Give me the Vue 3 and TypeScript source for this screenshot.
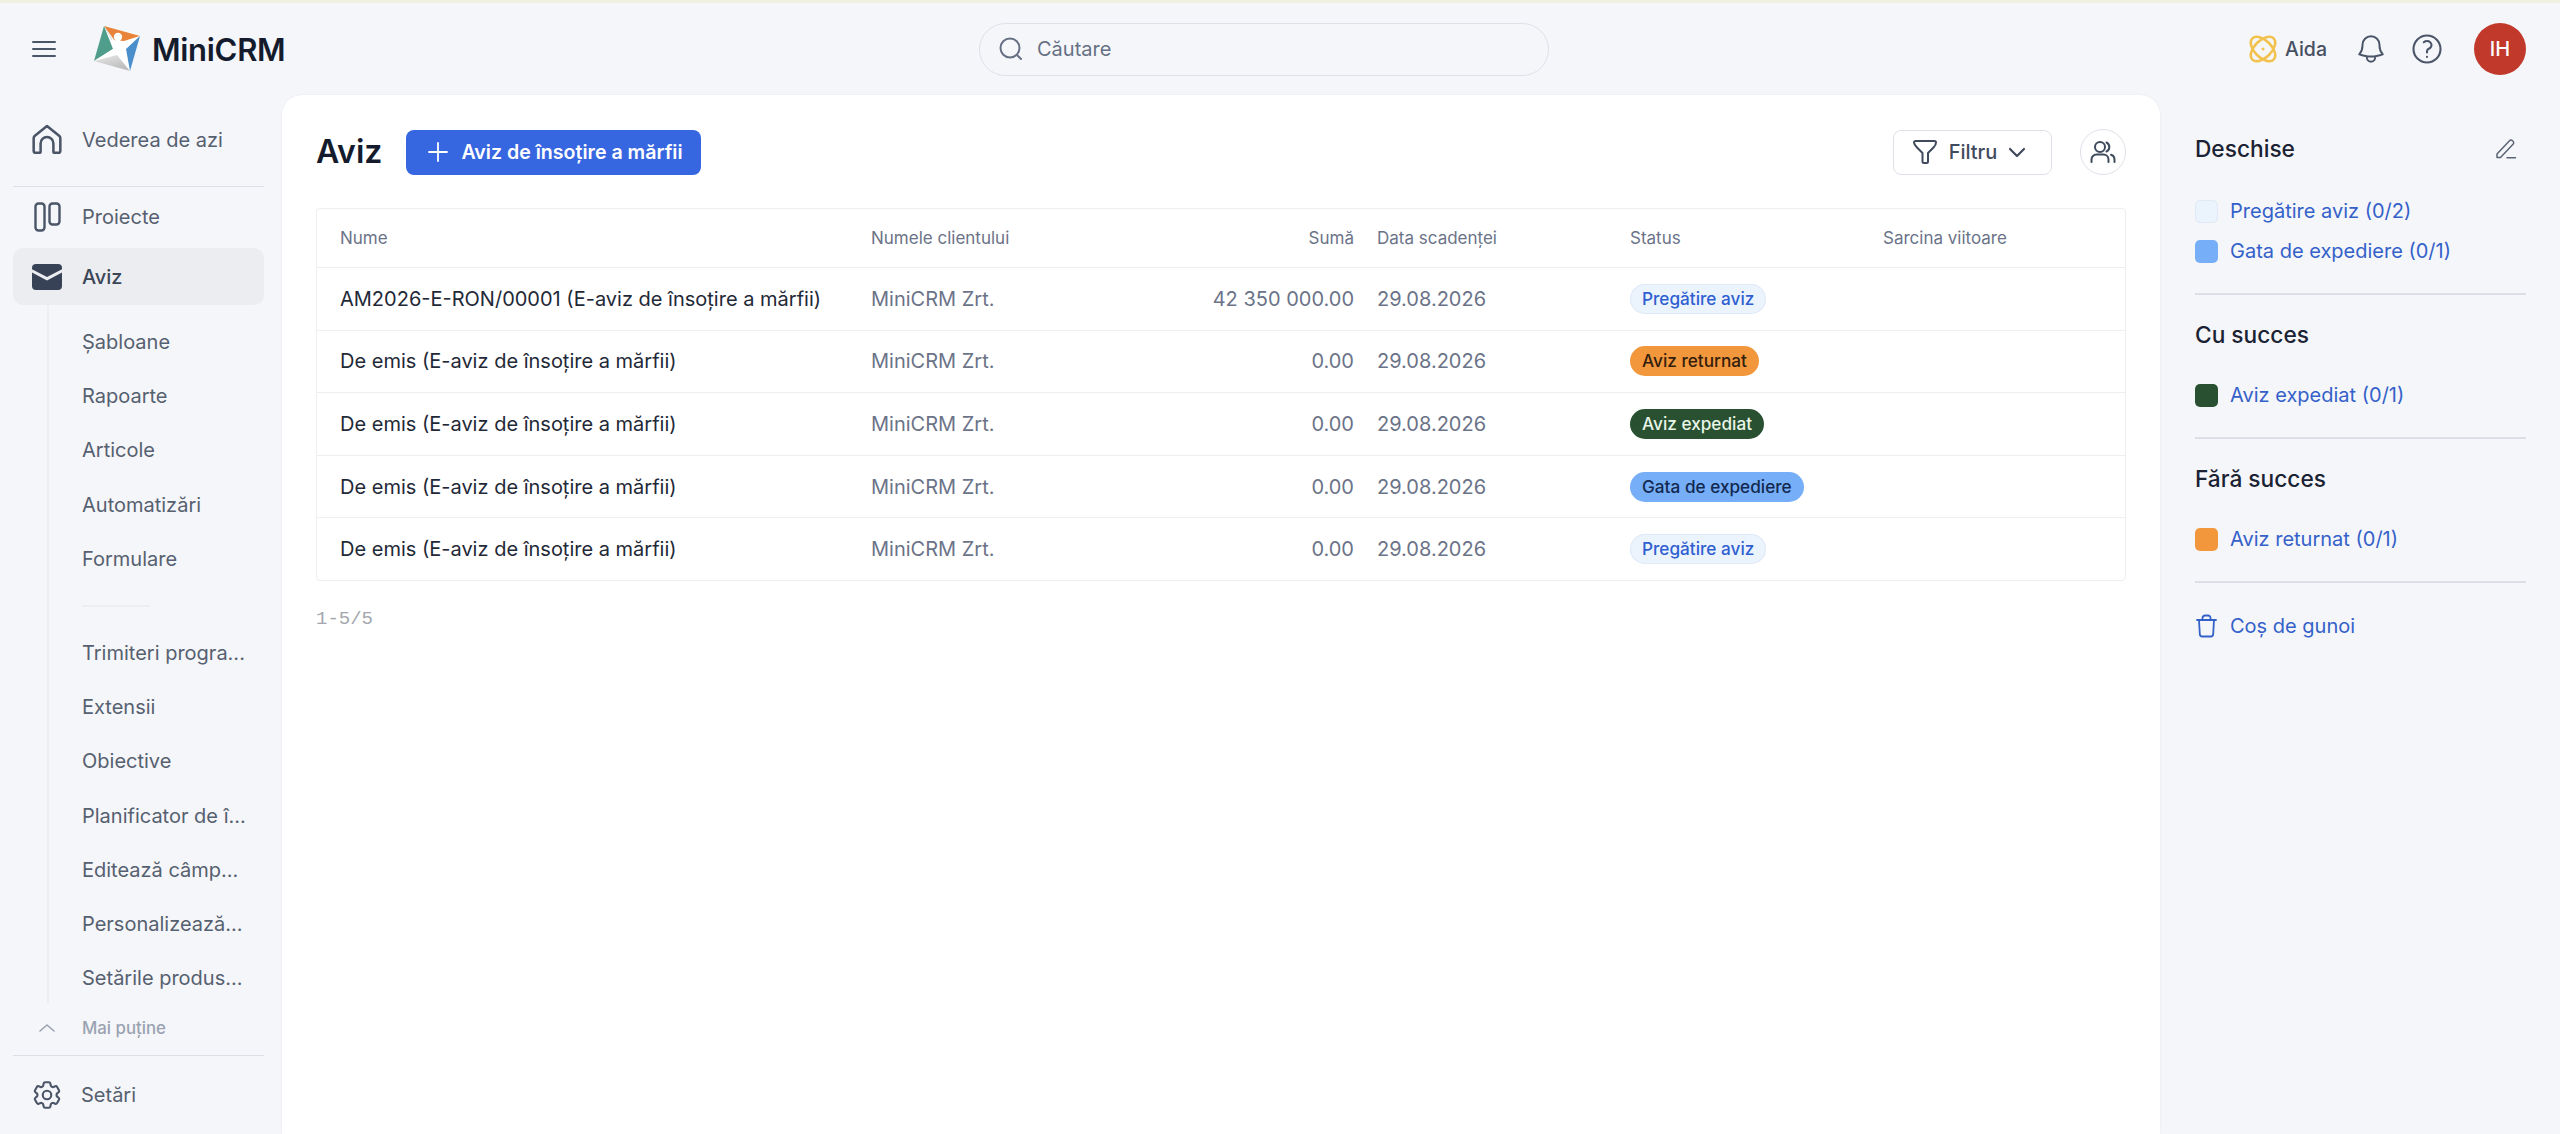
<script setup lang="ts">
interface Row { name: string; sum: string; status: string; cls: string }
const primaryRows: Row[] = [
  { name: 'AM2026-E-RON/00001 (E-aviz de însoțire a mărfii)', sum: '42 350 000.00', status: 'Pregătire aviz', cls: 'prep' },
  { name: 'De emis (E-aviz de însoțire a mărfii)', sum: '0.00', status: 'Aviz returnat', cls: 'ret' },
  { name: 'De emis (E-aviz de însoțire a mărfii)', sum: '0.00', status: 'Aviz expediat', cls: 'exp' },
  { name: 'De emis (E-aviz de însoțire a mărfii)', sum: '0.00', status: 'Gata de expediere', cls: 'gata' },
  { name: 'De emis (E-aviz de însoțire a mărfii)', sum: '0.00', status: 'Pregătire aviz', cls: 'prep' },
]
const subA = ['Șabloane', 'Rapoarte', 'Articole', 'Automatizări', 'Formulare']
const subB = ['Trimiteri progra...', 'Extensii', 'Obiective', 'Planificator de î...', 'Editează câmp...', 'Personalizează...', 'Setările produs...']
</script>

<template>
  <div class="page">
    <div class="strip"></div>
    <header class="top">
      <div class="brand">
        <svg class="burger" width="24" height="18" viewBox="0 0 24 18" fill="none" stroke="#4b5568" stroke-width="2" stroke-linecap="round"><path d="M1 2h22M1 9h22M1 16h22"/></svg>
        <svg class="logo" width="48" height="46" viewBox="0 0 48 46">
          <defs><linearGradient id="g" x1="0" y1="0" x2="0.4" y2="1"><stop offset="0" stop-color="#f2f2f2"/><stop offset="1" stop-color="#bdbdbd"/></linearGradient></defs>
          <polygon points="11,1 47,11 25,20" fill="#e9833a"/>
          <polygon points="47,11 37,46 25,24" fill="#4a8fcc"/>
          <polygon points="37,46 1,36 22,26" fill="url(#g)"/>
          <polygon points="1,36 11,1 23,22" fill="#4f9e8b"/>
          <polygon points="11,1 19,15 31,16 47,11 33,24 37,46 24,30 1,36 20,24" fill="#fff"/>
          <circle cx="25" cy="12" r="4.2" fill="#fff"/>
        </svg>
        <span class="wordmark">MiniCRM</span>
      </div>
      <div class="search">
        <svg width="26" height="26" viewBox="0 0 26 26" fill="none" stroke="#667085" stroke-width="2" stroke-linecap="round"><circle cx="12" cy="12" r="9.5"/><path d="M19 19l4 4"/></svg>
        <span>Căutare</span>
      </div>
      <div class="tools">
        <span class="aida">
          <svg width="28" height="28" viewBox="0 0 28 28" fill="none" stroke="#f2c14e" stroke-width="2.6"><ellipse cx="14" cy="14" rx="15" ry="8.500" transform="rotate(45 14 14)"/><ellipse cx="14" cy="14" rx="15" ry="8.500" transform="rotate(-45 14 14)"/><circle cx="14" cy="14" r="1.500" fill="#f2c14e" stroke="none"/></svg>
          <span>Aida</span>
        </span>
        <svg class="bell" width="34" height="34" viewBox="0 0 24 24" fill="none" stroke="#4b5568" stroke-width="1.4" stroke-linecap="round" stroke-linejoin="round"><path d="M14.857 17.082a23.848 23.848 0 0 0 5.454-1.31A8.967 8.967 0 0 1 18 9.75V9A6 6 0 0 0 6 9v.75a8.967 8.967 0 0 1-2.312 6.022c1.733.64 3.56 1.085 5.455 1.31m5.714 0a24.255 24.255 0 0 1-5.714 0m5.714 0a3 3 0 1 1-5.714 0"/></svg>
        <svg class="help" width="36" height="36" viewBox="0 0 24 24" fill="none" stroke="#4b5568" stroke-width="1.4" stroke-linecap="round" stroke-linejoin="round"><path d="M9.879 7.519c1.171-1.025 3.071-1.025 4.242 0 1.172 1.025 1.172 2.687 0 3.712-.203.179-.43.326-.67.442-.745.361-1.45.999-1.45 1.827v.75M21 12a9 9 0 1 1-18 0 9 9 0 0 1 18 0Zm-9 5.25h.008v.008H12v-.008Z"/></svg>
        <span class="avatar">IH</span>
      </div>
    </header>

    <div class="body">
      <aside class="side">
        <div class="nav-item first">
          <svg class="nav-icon" width="32" height="32" viewBox="0 0 24 24" fill="none" stroke="#4b5568" stroke-width="1.9" stroke-linejoin="round"><path d="M2 20V10.6c0-.6.3-1.2.7-1.6L12 1.500 21.3 9c.4.4.7 1 .7 1.6V20a1.6 1.6 0 0 1-1.6 1.6h-2.6a1 1 0 0 1-1-1v-6a4.8 4.8 0 0 0-9.6 0v6a1 1 0 0 1-1 1H3.6A1.6 1.6 0 0 1 2 20z"/></svg>
          <span>Vederea de azi</span>
        </div>
        <div class="rule"></div>
        <div class="nav-item proj">
          <svg class="nav-icon" width="32" height="32" viewBox="0 0 32 32" fill="none" stroke="#4b5568" stroke-width="2.4"><rect x="4.500" y="2.500" width="9" height="27" rx="3"/><rect x="18.500" y="2.500" width="10" height="21" rx="3"/></svg>
          <span>Proiecte</span>
        </div>
        <div class="nav-item active">
          <svg class="nav-icon" width="32" height="28" viewBox="0 0 32 28"><path d="M5 1h22a4 4 0 0 1 4 4v1.200L16 14 1 6.200V5a4 4 0 0 1 4-4z" fill="#374257"/><path d="M1 9.600l15 7.800 15-7.800V23a4 4 0 0 1-4 4H5a4 4 0 0 1-4-4z" fill="#374257"/></svg>
          <span>Aviz</span>
        </div>
        <div class="sub">
          <div v-for="s in subA" :key="s" class="sub-item"><span>{{ s }}</span></div>
          <div class="sub-rule"></div>
          <div v-for="s in subB" :key="s" class="sub-item"><span>{{ s }}</span></div>
        </div>
        <div class="less">
          <svg width="18" height="10" viewBox="0 0 18 10" fill="none" stroke="#9aa2b1" stroke-width="1.6" stroke-linecap="round" stroke-linejoin="round"><path d="M2 8l7-6 7 6"/></svg>
          <span>Mai puține</span>
        </div>
        <div class="rule"></div>
        <div class="nav-item settings">
          <svg class="nav-icon" width="34" height="34" viewBox="0 0 24 24" fill="none" stroke="#4b5568" stroke-width="1.5" stroke-linejoin="round"><path d="M9.594 3.94c.09-.542.56-.94 1.11-.94h2.593c.55 0 1.02.398 1.11.94l.213 1.281c.063.374.313.686.645.87.074.04.147.083.22.127.325.196.72.257 1.075.124l1.217-.456a1.125 1.125 0 0 1 1.37.49l1.296 2.247a1.125 1.125 0 0 1-.26 1.431l-1.003.827c-.293.241-.438.613-.43.992a7.723 7.723 0 0 1 0 .255c-.008.378.137.75.43.991l1.004.827c.424.35.534.955.26 1.43l-1.298 2.247a1.125 1.125 0 0 1-1.369.491l-1.217-.456c-.355-.133-.75-.072-1.076.124a6.47 6.47 0 0 1-.22.128c-.331.183-.581.495-.644.869l-.213 1.281c-.09.543-.56.94-1.11.94h-2.594c-.55 0-1.019-.398-1.11-.94l-.213-1.281c-.062-.374-.312-.686-.644-.87a6.52 6.52 0 0 1-.22-.127c-.325-.196-.72-.257-1.076-.124l-1.217.456a1.125 1.125 0 0 1-1.369-.49l-1.297-2.247a1.125 1.125 0 0 1 .26-1.431l1.004-.827c.292-.24.437-.613.43-.991a6.932 6.932 0 0 1 0-.255c.007-.38-.138-.751-.43-.992l-1.004-.827a1.125 1.125 0 0 1-.26-1.43l1.297-2.247a1.125 1.125 0 0 1 1.37-.491l1.216.456c.356.133.751.072 1.076-.124.072-.044.146-.086.22-.128.332-.183.582-.495.644-.869l.214-1.28Z"/><path d="M15 12a3 3 0 1 1-6 0 3 3 0 0 1 6 0Z"/></svg>
          <span>Setări</span>
        </div>
      </aside>

      <main class="main">
        <div class="title-row">
          <h1>Aviz</h1>
          <button class="primary">
            <svg width="20" height="20" viewBox="0 0 20 20" stroke="#fff" stroke-width="1.8" stroke-linecap="round"><path d="M10 1v18M1 10h18"/></svg>
            <span>Aviz de însoțire a mărfii</span>
          </button>
          <div class="spacer"></div>
          <button class="filter">
            <svg width="26" height="26" viewBox="0 0 26 26" fill="none" stroke="#3f4a5c" stroke-width="2" stroke-linejoin="round"><path d="M2 3.500C2 2.700 2.700 2 3.500 2h19c.8 0 1.500.7 1.500 1.500 0 2-1 3.500-2.500 5l-5.500 5.500v8.500c0 .8-.7 1.500-1.500 1.500h-2.500c-.8 0-1.500-.7-1.500-1.500V14L5 8.500C3.500 7 2 5.500 2 3.500z"/></svg>
            <span>Filtru</span>
            <svg width="18" height="11" viewBox="0 0 18 11" fill="none" stroke="#3f4a5c" stroke-width="2.200" stroke-linecap="round" stroke-linejoin="round"><path d="M2 2l7 7 7-7"/></svg>
          </button>
          <button class="round">
            <svg width="26" height="24" viewBox="0 0 26 24" fill="none" stroke="#3f4a5c" stroke-width="2" stroke-linecap="round"><circle cx="10" cy="7" r="5"/><path d="M1.500 22v-2.500a5 5 0 0 1 5-5h7a5 5 0 0 1 5 5V22"/><path d="M16.500 2.500a5 5 0 0 1 0 9M21 14.800a5 5 0 0 1 3.500 4.700V22"/></svg>
          </button>
        </div>

        <div class="table">
          <div class="tr th">
            <div class="td">Nume</div>
            <div class="td">Numele clientului</div>
            <div class="td num">Sumă</div>
            <div class="td">Data scadenței</div>
            <div class="td">Status</div>
            <div class="td">Sarcina viitoare</div>
          </div>
          <div v-for="(r, i) in primaryRows" :key="i" class="tr">
            <div class="td name">{{ r.name }}</div>
            <div class="td muted">MiniCRM Zrt.</div>
            <div class="td num muted">{{ r.sum }}</div>
            <div class="td muted">29.08.2026</div>
            <div class="td"><span class="pill" :class="r.cls">{{ r.status }}</span></div>
            <div class="td"></div>
          </div>
        </div>
        <div class="pager">1-5/5</div>
      </main>

      <aside class="panel">
        <div class="panel-head">
          <h2>Deschise</h2>
          <svg width="22" height="22" viewBox="0 0 22 22" fill="none" stroke="#5b6474" stroke-width="1.500" stroke-linecap="round" stroke-linejoin="round"><path d="M2 19.500v-3.500L14.500 2.800a2 2 0 0 1 3 0l.5.5a2 2 0 0 1 0 3L5.500 19.500z"/><path d="M12 19.800h8.500"/></svg>
        </div>
        <div class="legend l1"><i class="sw prep-sw"></i><span>Pregătire aviz (0/2)</span></div>
        <div class="legend"><i class="sw gata-sw"></i><span>Gata de expediere (0/1)</span></div>
        <div class="prule"></div>
        <h2>Cu succes</h2>
        <div class="legend l2"><i class="sw exp-sw"></i><span>Aviz expediat (0/1)</span></div>
        <div class="prule"></div>
        <h2>Fără succes</h2>
        <div class="legend l2"><i class="sw ret-sw"></i><span>Aviz returnat (0/1)</span></div>
        <div class="prule"></div>
        <div class="legend trash">
          <svg width="23" height="24" viewBox="0 0 23 24" fill="none" stroke="#3461c9" stroke-width="1.800" stroke-linecap="round" stroke-linejoin="round"><path d="M2 6h19M7.500 6V4a2.500 2.500 0 0 1 2.500-2.500h3A2.500 2.500 0 0 1 15.500 4v2M4 6l.8 14a2.500 2.500 0 0 0 2.500 2.500h8.400a2.500 2.500 0 0 0 2.500-2.500L19 6"/></svg>
          <span>Coș de gunoi</span>
        </div>
      </aside>
    </div>
  </div>
</template>

<style>
html, body { margin: 0; padding: 0; background: #f5f6f9; }
</style>

<style scoped>
.page {
  height: 100vh; display: flex; flex-direction: column; overflow: hidden;
  background: #f5f6f9; color: #1f2937;
  font-family: Inter, "Noto Sans", sans-serif;
}
.strip { height: 3px; background: #f0f2df; flex: none; }
.top { height: 92px; flex: none; display: flex; align-items: center; position: relative; }
.brand { display: flex; align-items: center; padding-left: 32px; width: 979px; box-sizing: border-box; }
.burger { margin-right: 37px; }
.logo { margin-right: 11px; margin-top: -2px; }
.wordmark { font-size: 31px; font-weight: 600; color: #141b2d; letter-spacing: -0.3px; }
.search {
  width: 570px; height: 53px; box-sizing: border-box; border: 1px solid #dfe1e8; border-radius: 27px;
  display: flex; align-items: center; gap: 13px; padding-left: 18px; color: #667085; font-size: 20px;
}
.tools { margin-left: auto; padding-right: 34px; display: flex; align-items: center; }
.aida { display: flex; align-items: center; gap: 8px; font-size: 19.5px; font-weight: 500; color: #475063; margin-right: 27px; }
.bell { margin-right: 21px; }
.help { margin-right: 29px; }
.avatar {
  width: 52px; height: 52px; border-radius: 50%; background: #c0392b; color: #fff;
  display: flex; align-items: center; justify-content: center; font-size: 20px; font-weight: 500;
}
.body { flex: 1; display: flex; min-height: 0; }
.side { width: 282px; flex: none; box-sizing: border-box; padding: 0 18px 0 13px; display: flex; flex-direction: column; }
.nav-item { display: flex; align-items: center; color: #556070; font-size: 20px; padding-left: 18px; gap: 19px; flex: none; }
.nav-icon { flex: none; }
.first { height: 66px; margin-top: 12px; margin-bottom: 13px; }
.proj { height: 60px; margin-bottom: 1px; }
.active { height: 57px; background: #ebedf1; border-radius: 10px; color: #3c4657; font-weight: 500; }
.settings { height: 78px; gap: 17px; padding-left: 17px; }
.rule { height: 1px; background: #dcdfe5; flex: none; }
.sub { margin-left: 34px; position: relative; padding-top: 10px; padding-left: 35px; height: 698px; box-sizing: border-box; flex: none; }
.sub::before { content: ""; position: absolute; left: 0; top: 0; bottom: 0; width: 2px; background: #eceef2; }
.sub-item { height: 54.2px; display: flex; align-items: center; color: #556070; font-size: 20px; white-space: nowrap; }
.sub-rule { width: 68px; height: 2px; background: #eceef2; margin: 19px 0 19px; }
.less { height: 50px; margin-bottom: 2px; display: flex; align-items: center; color: #9aa2b1; font-size: 16.8px; font-weight: 500; padding-left: 25px; gap: 26px; flex: none; }
.main {
  flex: 1; min-width: 0; background: #fff; border-radius: 20px 20px 0 0; box-sizing: border-box;
  padding: 34px 34px 0 34px; box-shadow: 0 0 2px rgba(30, 40, 60, .08);
}
.title-row { display: flex; align-items: center; height: 46px; }
h1 { font-size: 32px; font-weight: 600; margin: 0 24px 0 0; color: #141b2d; line-height: 1; }
.primary {
  height: 45px; width: 295px; box-sizing: border-box; background: #3666e0; color: #fff; border: 0; border-radius: 8px; font: inherit;
  font-size: 19.6px; font-weight: 600; display: flex; align-items: center; gap: 13px; padding: 0 0 0 22px;
}
.spacer { flex: 1; }
.filter {
  height: 45px; width: 159px; box-sizing: border-box; background: #fff; border: 1px solid #dfe1e8; border-radius: 8px;
  font: inherit; font-size: 20px; font-weight: 500; color: #3f4a5c; display: flex; align-items: center; justify-content: center; gap: 11px;
  margin-right: 28px; padding: 0 7px 0 0;
}
.round {
  width: 46px; height: 46px; box-sizing: border-box; padding: 0; border-radius: 50%; background: #fff; border: 1px solid #dfe1e8;
  display: flex; align-items: center; justify-content: center;
}
.table { margin-top: 33px; border: 1px solid #eceef1; border-radius: 4px; }
.tr { display: grid; grid-template-columns: 530px 200px 307px 253px 253px 1fr; height: 62.6px; box-sizing: border-box; border-top: 1px solid #eceef1; align-items: center; }
.th { height: 58px; border-top: 0; font-size: 17px; color: #6b7388; }
.td { padding: 0 0 0 23px; white-space: nowrap; }
.td:nth-child(2) { padding-left: 24px; }
.num { text-align: right; }
.name { font-size: 20px; color: #1f2937; }
.muted { font-size: 20px; color: #6b7388; }
.pill {
  display: inline-block; height: 30px; line-height: 30px; box-sizing: border-box; border-radius: 15px; padding: 0 12px;
  font-size: 17.2px; font-weight: 500;
}
.prep { background: #ebf3fd; color: #2f5fd0; box-shadow: inset 0 0 0 1px #dfe9f6; }
.ret { background: #f2973c; color: #33200c; }
.exp { background: #295030; color: #e8f6e8; }
.gata { background: #76aef8; color: #12294f; }
.pager { margin-top: 27px; font-family: "Liberation Mono", monospace; font-size: 19px; color: #a3a6ad; }
.panel { width: 400px; flex: none; box-sizing: border-box; padding: 40px 34px 0 35px; }
.panel-head { display: flex; align-items: center; justify-content: space-between; padding-right: 9px; }
h2 { font-size: 22.7px; font-weight: 500; margin: 0; line-height: 28px; color: #1a2233; }
.legend { display: flex; align-items: center; gap: 12px; color: #3461c9; font-size: 20px; height: 40px; }
.l1 { margin-top: 28px; }
.l2 { margin-top: 26px; }
.sw { width: 23px; height: 23px; border-radius: 5px; flex: none; box-sizing: border-box; }
.prep-sw { background: #ebf3fd; border: 1px solid #e0e9f5; }
.gata-sw { background: #76aef8; }
.exp-sw { background: #295030; }
.ret-sw { background: #f2973c; }
.prule { height: 2px; background: #dcdfe5; margin: 22px 0 26px; }
.trash { margin-top: -3px; }
</style>
